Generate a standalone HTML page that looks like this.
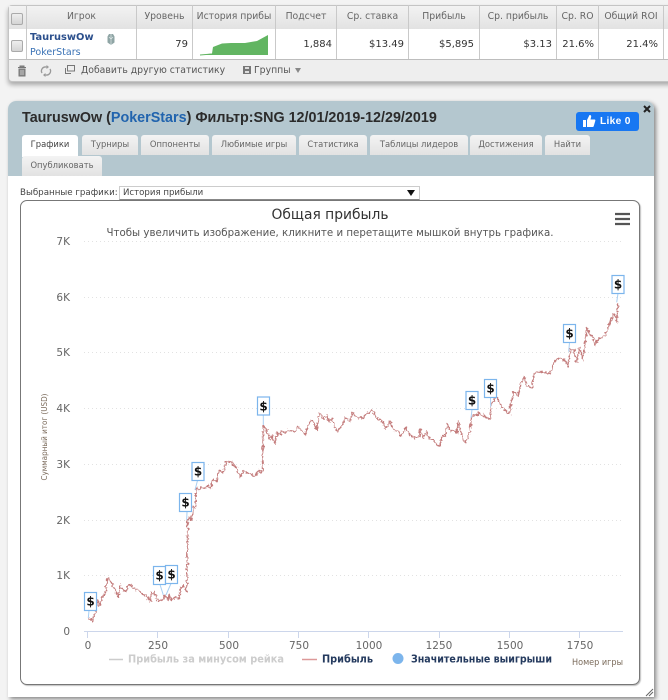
<!DOCTYPE html>
<html><head><meta charset="utf-8"><title>TauruswOw</title>
<style>
html,body{margin:0;padding:0;width:668px;height:700px;overflow:hidden;background:#f3f3f3;font-family:"DejaVu Sans","Liberation Sans",sans-serif}
#w{position:absolute;left:0;top:0;width:668px;height:700px;overflow:hidden;filter:blur(.3px)}
.a{position:absolute}
.t{position:absolute;white-space:nowrap;font-size:9.3px;line-height:12px;color:#555}
.c{text-align:center}.r{text-align:right;color:#333;font-size:10px}
.h{top:11px;height:12px;color:#666}
.v{position:absolute;top:5px;width:1px;height:54px;background:#c9c9c9}
.tab{position:absolute;height:20px;top:135px;background:linear-gradient(#f3f3f3,#e2e2e2);border-radius:3px 3px 0 0;text-align:center;font-size:8.4px;line-height:19px;color:#666;white-space:nowrap}
.cb{position:absolute;width:10px;height:10px;border:1px solid #aaa;border-radius:2px;background:linear-gradient(#eee,#d4d4d4)}
</style></head><body><div id="w">

<!-- top table -->
<div class="a" style="left:8px;top:5px;width:670px;height:77px;background:#eee;border:1px solid #c4c4c4;box-sizing:border-box;border-radius:4px 0 0 4px;box-shadow:0 3px 5px rgba(0,0,0,.3)"></div>
<div class="a" style="left:9px;top:6px;width:659px;height:23px;background:linear-gradient(#f2f2f2,#e2e2e2)"></div>
<div class="a" style="left:9px;top:29px;width:659px;height:30px;background:#fff"></div>
<div class="a" style="left:9px;top:59px;width:659px;height:1px;background:#bdbdbd"></div>
<div class="v" style="left:26px"></div><div class="v" style="left:136px"></div><div class="v" style="left:192px"></div><div class="v" style="left:275px"></div><div class="v" style="left:336px"></div><div class="v" style="left:408px"></div><div class="v" style="left:479px"></div><div class="v" style="left:556px"></div><div class="v" style="left:598px"></div><div class="v" style="left:663px"></div>
<div class="cb" style="left:11px;top:13px"></div><div class="cb" style="left:11px;top:40px"></div>

<div class="t h c" style="left:27px;width:109px">Игрок</div>
<div class="t h c" style="left:137px;width:55px">Уровень</div>
<div class="t h c" style="left:193px;width:82px">История прибы</div>
<div class="t h c" style="left:276px;width:60px">Подсчет</div>
<div class="t h c" style="left:337px;width:71px">Ср. ставка</div>
<div class="t h c" style="left:409px;width:70px">Прибыль</div>
<div class="t h c" style="left:480px;width:76px">Ср. прибыль</div>
<div class="t h c" style="left:557px;width:41px">Ср. RO</div>
<div class="t h c" style="left:599px;width:64px">Общий ROI</div>

<div class="t" style="left:30px;top:32px;font-weight:bold;color:#2b4f8c;font-size:9.9px">TauruswOw</div>
<div class="t" style="left:30px;top:47px;color:#3a72b5;font-size:9.5px">PokerStars</div>
<svg class="a" style="left:106px;top:33px" width="10" height="13" viewBox="0 0 10 13"><path d="M3 1h4l1.500 2.500v6L5 12 1.500 9.500v-6z" fill="#8fa5a5"/><path d="M5 1v11M3 4l2 2 2-2" stroke="#dfe8e8" fill="none" stroke-width=".7"/></svg>

<div class="t r" style="left:140px;width:48px;top:39px">79</div>
<div class="t r" style="left:280px;width:52px;top:39px">1,884</div>
<div class="t r" style="left:340px;width:64px;top:39px">$13.49</div>
<div class="t r" style="left:410px;width:64px;top:39px">$5,895</div>
<div class="t r" style="left:490px;width:62px;top:39px">$3.13</div>
<div class="t r" style="left:558px;width:36px;top:39px">21.6%</div>
<div class="t r" style="left:600px;width:58px;top:39px">21.4%</div>

<svg class="a" style="left:195px;top:30px" width="80" height="28"><path d="M5 25L17 23.500L18 17L27 13.500L36 13L50 13L62 11L73 5V25Z" fill="#62b562"/><path d="M5 25L17 24" stroke="#62b562" fill="none"/></svg>

<!-- toolbar -->
<svg class="a" style="left:14px;top:64px" width="16" height="14" viewBox="0 0 16 14"><path d="M4 3.500h8M6 3.500V2h4v1.500M5 5h6v7H5z" fill="#888" stroke="#777" stroke-width="1"/><path d="M7 6v5M9 6v5" stroke="#ddd" stroke-width=".7"/></svg>
<svg class="a" style="left:39px;top:64px" width="14" height="14" viewBox="0 0 14 14"><path d="M3 9A4 4 0 0 1 7 3h1M11 5A4 4 0 0 1 7 11H6" fill="none" stroke="#999" stroke-width="1.300"/><path d="M7.500 1l2.500 2-2.500 2zM6.500 9l-2.500 2 2.500 2z" fill="#999"/></svg>
<svg class="a" style="left:64px;top:64px" width="12" height="12" viewBox="0 0 12 12"><rect x="3.500" y="1.500" width="7" height="5.500" fill="none" stroke="#777"/><path d="M1.500 4v5.500H7" fill="none" stroke="#777"/></svg>
<div class="t" style="left:81px;top:65px;color:#555;font-size:9.3px">Добавить другую статистику</div>
<svg class="a" style="left:243px;top:66px" width="9" height="9"><path d="M0 0h8v8H0z" fill="#777"/><path d="M2 1h4v2H2zM2 5h4v2H2z" fill="#ddd"/></svg>
<div class="t" style="left:254px;top:65px;color:#555;font-size:9.300px">Группы</div>
<div class="a" style="left:295px;top:68px;border:3.500px solid transparent;border-top:5px solid #888;border-bottom:0"></div>

<!-- panel -->
<div class="a" style="left:8px;top:101px;width:646px;height:596px;background:#fff;border-radius:8px 8px 0 0;box-shadow:2px 2px 4px rgba(0,0,0,.45)"></div>
<div class="a" style="left:8px;top:101px;width:646px;height:75px;background:#b4c7cf;border-radius:8px 8px 0 0"></div>
<div class="t" style="left:22px;top:109px;font:bold 14.33px/18px 'Liberation Sans',sans-serif;color:#2b2b2b">TauruswOw (<span style="color:#2164ae">PokerStars</span>) Фильтр:SNG 12/01/2019-12/29/2019</div>
<div class="a" style="left:576px;top:112px;width:63px;height:19px;background:#1877f2;border-radius:3px"></div>
<svg class="a" style="left:582px;top:114px" width="14" height="14" viewBox="0 0 14 14"><path d="M1 6h3v7H1zM5 6l2.500-5c1.500 0 2 1 1.500 2.500L8.500 5.500H12.500c1 0 1 1 .7 1.800l-1.500 5c-.2.500-.5.700-1 .7H5z" fill="#fff"/></svg>
<div class="t" style="left:600px;top:115px;font:bold 10.200px/13px 'Liberation Sans',sans-serif;color:#fff;letter-spacing:.3px">Like 0</div>
<svg class="a" style="left:643px;top:105px" width="8" height="8"><path d="M1 1l6 6M7 1L1 7" stroke="#222" stroke-width="2"/></svg>

<div class="tab" style="left:22px;width:56px;height:22px;background:linear-gradient(#fff,#fff);color:#444">Графики</div>
<div class="tab" style="left:82px;width:56px">Турниры</div>
<div class="tab" style="left:141px;width:68px">Оппоненты</div>
<div class="tab" style="left:212px;width:84px">Любимые игры</div>
<div class="tab" style="left:299px;width:68px">Статистика</div>
<div class="tab" style="left:370px;width:98px">Таблицы лидеров</div>
<div class="tab" style="left:470px;width:72px">Достижения</div>
<div class="tab" style="left:545px;width:45px">Найти</div>
<div class="tab" style="left:22px;top:156px;width:80px">Опубликовать</div>

<div class="t" style="left:20px;top:187px;color:#444;font-size:8.700px">Выбранные графики:</div>
<div class="a" style="left:119px;top:186px;width:301px;height:14px;background:#fff;border:1px solid #ccc;border-bottom-color:#888;box-sizing:border-box"></div>
<div class="t" style="left:123px;top:187px;color:#444;font-size:8.600px">История прибыли</div>
<div class="a" style="left:407px;top:190px;border:4px solid transparent;border-top:6px solid #111;border-bottom:0"></div>

<!-- chart -->
<div class="a" style="left:20px;top:200px;width:620px;height:485px;border:1px solid #777;box-sizing:border-box;border-radius:7px;box-shadow:1px 1px 1px rgba(0,0,0,.25);background:#fff"></div>
<svg class="a" style="left:0;top:0" width="668" height="700" font-family="'DejaVu Sans','Liberation Sans',sans-serif">
<defs><filter id="j" filterUnits="userSpaceOnUse" x="80" y="290" width="550" height="340"><feTurbulence type="fractalNoise" baseFrequency="0.35" numOctaves="2" seed="7" result="n"/><feDisplacementMap in="SourceGraphic" in2="n" scale="5" xChannelSelector="R" yChannelSelector="G"/></filter></defs>
<text x="330" y="219" font-size="14" fill="#333" text-anchor="middle" textLength="117" lengthAdjust="spacingAndGlyphs">Общая прибыль</text>
<text x="330" y="236" font-size="10.500" fill="#555" text-anchor="middle" textLength="447" lengthAdjust="spacingAndGlyphs">Чтобы увеличить изображение, кликните и перетащите мышкой внутрь графика.</text>
<path d="M615 214h15M615 219h15M615 224h15" stroke="#555" stroke-width="2.200"/>
<g stroke="#e2e2e2" stroke-dasharray="1 3" stroke-width="1"><path d="M84 241.500H623M84 297.500H623M84 352.500H623M84 408.500H623M84 464.500H623M84 520.500H623M84 575.500H623"/></g>
<g font-size="10.500" fill="#666" text-anchor="end"><text x="70" y="245">7K</text><text x="70" y="301">6K</text><text x="70" y="356">5K</text><text x="70" y="412">4K</text><text x="70" y="468">3K</text><text x="70" y="524">2K</text><text x="70" y="579">1K</text><text x="70" y="635">0</text></g>
<text transform="translate(47,437) rotate(-90)" font-size="8" fill="#7a6a5a" text-anchor="middle" textLength="87" lengthAdjust="spacingAndGlyphs">Суммарный итог (USD)</text>
<path d="M84 631.500H623M87.500 632v6M157.500 632v6M228.500 632v6M298.500 632v6M368.500 632v6M439.500 632v6M509.500 632v6M579.500 632v6" stroke="#ccd6eb" fill="none"/>
<g font-size="10.500" fill="#666" text-anchor="middle"><text x="88" y="649">0</text><text x="158" y="649">250</text><text x="229" y="649">500</text><text x="299" y="649">750</text><text x="369" y="649">1000</text><text x="439" y="649">1250</text><text x="510" y="649">1500</text><text x="580" y="649">1750</text></g>

<path filter="url(#j)" fill="none" stroke="#c47d7d" stroke-width="1.300" stroke-linejoin="round" d="M88.300 618.300L90 619.500L92.700 621L95.300 611.700L97.300 600L100 605.700L102.700 595L105 595L107.700 578.300L111.700 583.300L115 590L118.300 596.700L120 585.700L123.300 590L125.700 591.700L129.300 584L132 587L135 589L138.300 590L141.700 594L146.700 596L150 601.700L151.700 592.700L154 592.700L158.300 601L163.300 599.300L165 595L167.300 600L169 595L171.700 600.700L175 597L179 598.700L181 588.300L183.300 585.700L185.700 588.300L186.700 592.700L187.700 520L190 516.700L191.300 520.700L193.300 506.700L195.300 506.700L196.700 487.300L199 490L201.700 487.700L205 488.300L208.300 485L210.700 488.300L212.700 479.300L216.700 481.700L219 470L223.300 472.700L226 461.700L230.700 461L233 464L236.700 468.300L240.700 477.700L242.300 470.700L248.300 473.300L251 474L255 476.700L258.300 470.700L262.300 472.300L263.300 425L267.300 431.700L270 440L271.700 435L275 444L277.300 431.700L280 435L281.700 431L285 433.300L288.300 430L295 431.700L298.300 426.700L305 435L310 420.700L313.300 421.700L316.700 429.300L319 413.300L323.300 418.300L327.300 416L329.300 421.700L331.700 418.300L336.700 430.700L341.700 426.700L345 417.700L350 421.700L352.300 411.700L356.700 417.300L361.700 418.300L366.700 414.300L371.700 410L376.700 418.300L381.700 420.700L385 428.300L388.300 425L390 420.700L392.700 429.300L398.300 431.700L401 437.300L405 427.700L410 435L415 438.300L419 437.300L420 429L423.300 438.300L426 431.700L430 439.300L433.300 439.300L436.700 445L440 446L442.300 435L445 437.300L447.300 424.300L450.700 431.700L455 430L456.700 433L458.300 421.700L465 444L470 431.700L471.700 416.700L475 415L480 413.300L485 416.700L490 419.300L491 405L495 398.300L496.700 396.700L499.300 402.700L503.300 408.300L509.300 414L513.300 391.700L518.300 395.700L521 384L524.300 376.700L526.700 385.700L531.700 388.300L534.300 373.300L538.300 372.300L543.300 371L550 375L552.700 364.300L558.300 357.700L565 360L568.300 366.700L570 350L574 350L576.700 361.700L579.300 347.700L583.300 359.300L586.700 327.300L590 335L592.700 335.700L595 345L598.300 339L605 335.700L608.300 327.300L613.300 314L615.700 316.700L617 323.300L617.700 302.700"/>

<g stroke="#a9cff2" stroke-width="1" fill="none">
<path d="M89 610.500L88.300 618M160 584.500L163.300 595M171 583.500L166 595M187 511.500L186.700 520M197.500 480.500L195 490M263.300 415L263.300 425M472 409.500L471 418M490.500 397.500L490.700 406.700M569.500 342.500L568.700 351.700M618 293.500L616.700 302.300"/>
</g>
<g fill="#fff" stroke="#7cb5ec" stroke-width="1.200">
<rect x="84.500" y="592.500" width="12" height="18"/>
<rect x="153.500" y="566.500" width="12" height="18"/>
<rect x="165.500" y="565.500" width="12" height="18"/>
<rect x="179.500" y="493.500" width="12" height="18"/>
<rect x="192" y="462.500" width="12" height="18"/>
<rect x="257.500" y="397" width="12" height="18"/>
<rect x="466" y="391.500" width="12" height="18"/>
<rect x="484.500" y="379.500" width="12" height="18"/>
<rect x="563.500" y="324.500" width="12" height="18"/>
<rect x="612" y="275.500" width="12" height="18"/>
</g>
<g font-family="'DejaVu Sans',sans-serif" font-weight="bold" font-size="12" fill="#111" text-anchor="middle">
<text x="90.500" y="605.500">$</text><text x="159.500" y="579.500">$</text><text x="171.500" y="578.500">$</text><text x="185.500" y="506.500">$</text><text x="198" y="475.500">$</text><text x="263.500" y="410.500">$</text><text x="472" y="404.500">$</text><text x="490.500" y="392.500">$</text><text x="569.500" y="337.500">$</text><text x="618" y="288.500">$</text>
</g>

<path d="M109 659.500h14" stroke="#ccc" stroke-width="1.500"/>
<text x="128" y="662.500" font-size="10.500" font-weight="bold" fill="#ccc" textLength="156" lengthAdjust="spacingAndGlyphs">Прибыль за минусом рейка</text>
<path d="M302 659.500h15" stroke="#d99" stroke-width="1.500"/>
<text x="322" y="662.500" font-size="10.500" font-weight="bold" fill="#243a5e" textLength="51" lengthAdjust="spacingAndGlyphs">Прибыль</text>
<circle cx="398" cy="658.500" r="5.500" fill="#7cb5ec"/>
<text x="411" y="662.500" font-size="10.500" font-weight="bold" fill="#243a5e" textLength="141" lengthAdjust="spacingAndGlyphs">Значительные выигрыши</text>
<text x="572" y="665" font-size="8.500" fill="#7a6a5a" textLength="51" lengthAdjust="spacingAndGlyphs">Номер игры</text>
<path d="M646 696l7-7M649 696l4-4" stroke="#666" stroke-width="1"/>
</svg>
</div></body></html>
